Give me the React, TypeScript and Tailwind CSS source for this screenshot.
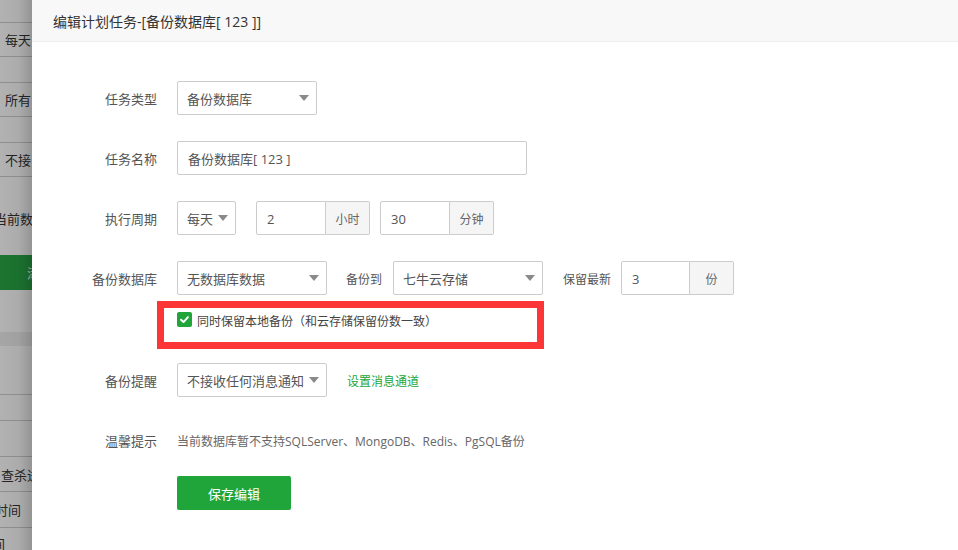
import React from "react";

const FONT = '"Open Sans","Noto Sans CJK SC",sans-serif';

function Arrow() {
  return (
    <svg width="10" height="6" viewBox="0 0 10 6" className="shrink-0">
      <polygon points="0,0 10,0 5,6" fill="#8a8a8a" />
    </svg>
  );
}

function Select({ w, text }: { w: string; text: string }) {
  return (
    <div
      className={`${w} h-[34px] shrink-0 border border-[#cccccc] rounded-[2px] bg-white flex items-center justify-between pl-[9px] pr-[7px] text-[13px] text-[#555] whitespace-nowrap overflow-hidden`}
    >
      <span className="pt-[4px]">{text}</span>
      <Arrow />
    </div>
  );
}

function InputGroup({ value, unit, iw }: { value: string; unit: string; iw: string }) {
  return (
    <div className="flex h-[34px] shrink-0">
      <div className={`${iw} h-full border border-[#cccccc] rounded-l-[2px] bg-white flex items-center pl-[10px] text-[13px] text-[#555]`}>
        <span className="pt-[4px]">{value}</span>
      </div>
      <div className="w-[44px] h-full border border-l-0 border-[#cccccc] rounded-r-[2px] bg-[#f5f5f5] flex items-center justify-center text-[12px] text-[#666]">
        <span className="pt-[4px]">{unit}</span>
      </div>
    </div>
  );
}

function Row({ label, children, className = "" }: { label: string; children: React.ReactNode; className?: string }) {
  return (
    <div className={`flex items-center h-[34px] ${className}`}>
      <div className="w-[125px] shrink-0 text-right text-[13px] text-[#555] pt-[4px]">{label}</div>
      <div className="ml-[20px] flex items-center">{children}</div>
    </div>
  );
}

function Strip() {
  return (
    <div className="relative w-[32px] h-[550px] shrink-0 overflow-hidden bg-white text-[13px] text-[#333] whitespace-nowrap">
      <div className="flex flex-col">
        <div className="h-[23px] border-b border-[#cfcfcf]" />
        <div className="h-[34px] border-b border-[#cfcfcf] flex items-center pl-[5px] pt-[3px]">每天</div>
        <div className="h-[26px] border-b border-[#cfcfcf]" />
        <div className="h-[34px] border-b border-[#cfcfcf] flex items-center pl-[5px] pt-[3px]">所有</div>
        <div className="h-[26px] border-b border-[#cfcfcf]" />
        <div className="h-[34px] border-b border-[#cfcfcf] flex items-center pl-[5px] pt-[3px]">不接</div>
        <div className="h-[78px] pt-[33px] -ml-[6px]">当前数</div>
        <div className="h-[35px] bg-[#28a745] flex items-center pl-[27px] pt-[3px] text-white">添</div>
        <div className="h-[42px]" />
        <div className="h-[14px] bg-[#eeeeee]" />
        <div className="h-[49px] border-b border-[#cfcfcf]" />
        <div className="h-[26px] border-b border-[#cfcfcf]" />
        <div className="h-[36px] border-b border-[#cfcfcf]" />
        <div className="h-[35px] border-b border-[#cfcfcf] flex items-center pl-[1px] pt-[3px]">查杀进</div>
        <div className="h-[36px] border-b border-[#cfcfcf] flex items-center -ml-[5px] pt-[3px]">时间</div>
        <div className="h-[30px] flex items-center -ml-[8px] pt-[3px]">间</div>
      </div>
      <div className="absolute inset-0 bg-[linear-gradient(90deg,rgba(0,0,0,0.3)_0%,rgba(0,0,0,0.33)_60%,rgba(0,0,0,0.42)_100%)]" />
    </div>
  );
}

export default function App() {
  return (
    <div className="flex w-[958px] h-[550px] overflow-hidden bg-white" style={{ fontFamily: FONT }}>
      <Strip />
      <div className="flex-1 flex flex-col bg-white">
        <div className="h-[42px] shrink-0 bg-[#f8f8f8] border-b border-[#eeeeee] flex items-center pl-[21px] text-[14px] text-[#333]">
          <span className="pt-[2px]">编辑计划任务-[备份数据库[ 123 ]]</span>
        </div>
        <div className="flex flex-col pt-[39px]">
          <Row label="任务类型">
            <Select w="w-[140px]" text="备份数据库" />
          </Row>
          <Row label="任务名称" className="mt-[26px]">
            <div className="w-[350px] h-[34px] border border-[#cccccc] rounded-[2px] bg-white flex items-center pl-[10px] text-[13px] text-[#555]">
              <span className="pt-[4px]">备份数据库[ 123 ]</span>
            </div>
          </Row>
          <Row label="执行周期" className="mt-[26px]">
            <Select w="w-[59px]" text="每天" />
            <div className="ml-[20px]">
              <InputGroup value="2" unit="小时" iw="w-[70px]" />
            </div>
            <div className="ml-[10px]">
              <InputGroup value="30" unit="分钟" iw="w-[70px]" />
            </div>
          </Row>
          <Row label="备份数据库" className="mt-[26px]">
            <Select w="w-[150px]" text="无数据库数据" />
            <span className="ml-[19px] text-[12px] text-[#555] pt-[4px]">备份到</span>
            <div className="ml-[11px]">
              <Select w="w-[150px]" text="七牛云存储" />
            </div>
            <span className="ml-[20px] text-[12px] text-[#555] pt-[4px]">保留最新</span>
            <div className="ml-[10px]">
              <InputGroup value="3" unit="份" iw="w-[69px]" />
            </div>
          </Row>
          <div className="ml-[125px] mt-[6px] w-[387px] h-[48px] border-[7px] border-[#fc3636] flex items-start pl-[13px] pt-[4px]">
            <div className="w-[15px] h-[15px] rounded-[2px] bg-[#20a53a] flex items-center justify-center shrink-0">
              <svg width="11" height="11" viewBox="0 0 12 12">
                <path d="M2.2 6.2 L4.9 8.8 L9.8 3.4" stroke="white" strokeWidth="2.1" fill="none" strokeLinecap="round" strokeLinejoin="round" />
              </svg>
            </div>
            <span className="ml-[5px] text-[12px] text-[#444] leading-[16px] pt-[2px]">同时保留本地备份（和云存储保留份数一致）</span>
          </div>
          <Row label="备份提醒" className="mt-[14px]">
            <Select w="w-[150px]" text="不接收任何消息通知" />
            <span className="ml-[20px] text-[12px] text-[#20a53a] pt-[4px]">设置消息通道</span>
          </Row>
          <Row label="温馨提示" className="mt-[26px]">
            <span className="text-[12px] text-[#666] pt-[4px]">当前数据库暂不支持SQLServer、MongoDB、Redis、PgSQL备份</span>
          </Row>
          <div className="ml-[145px] mt-[19px]">
            <button className="w-[114px] h-[34px] rounded-[2px] bg-[#20a53a] text-white text-[13px] flex items-center justify-center">
              <span className="pt-[4px]">保存编辑</span>
            </button>
          </div>
        </div>
      </div>
    </div>
  );
}
